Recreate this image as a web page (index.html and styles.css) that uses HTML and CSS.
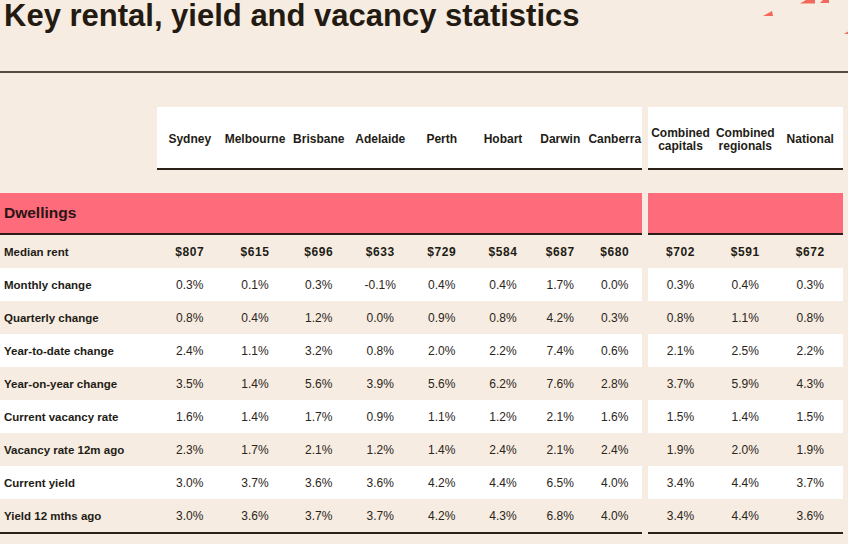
FILE: index.html
```html
<!DOCTYPE html>
<html lang="en">
<head>
<meta charset="utf-8">
<title>Key rental, yield and vacancy statistics</title>
<link rel="stylesheet" href="styles.css">
</head>
<body>
<div class="page">
  <header class="title-bar">
    <h1 class="title">Key rental, yield and vacancy statistics</h1>
    <svg class="deco" width="848" height="40" viewBox="0 0 848 40" aria-hidden="true">
      <polygon points="763,16 773,16 772,11" />
      <polygon points="800,3.5 815,3.5 815,0 806,0" />
      <polygon points="820,3 829,3 829,0 823,0" />
      <polygon points="844,34 848,34 848,31.5" />
    </svg>
  </header>

  <div class="table">
    <div class="row head">
      <div class="main">
        <div class="lbl"></div>
        <div class="c">Sydney</div>
        <div class="c">Melbourne</div>
        <div class="c">Brisbane</div>
        <div class="c">Adelaide</div>
        <div class="c">Perth</div>
        <div class="c">Hobart</div>
        <div class="c">Darwin</div>
        <div class="c">Canberra</div>
      </div>
      <div class="side">
        <div class="c">Combined<br>capitals</div>
        <div class="c">Combined<br>regionals</div>
        <div class="c">National</div>
      </div>
    </div>

    <div class="row section">
      <div class="main"><div class="sec-title">Dwellings</div></div>
      <div class="side"></div>
    </div>

    <div class="row data bold">
      <div class="main"><div class="lbl">Median rent</div><div class="c">$807</div><div class="c">$615</div><div class="c">$696</div><div class="c">$633</div><div class="c">$729</div><div class="c">$584</div><div class="c">$687</div><div class="c">$680</div></div>
      <div class="side"><div class="c">$702</div><div class="c">$591</div><div class="c">$672</div></div>
    </div>
    <div class="row data alt">
      <div class="main"><div class="lbl">Monthly change</div><div class="c">0.3%</div><div class="c">0.1%</div><div class="c">0.3%</div><div class="c">-0.1%</div><div class="c">0.4%</div><div class="c">0.4%</div><div class="c">1.7%</div><div class="c">0.0%</div></div>
      <div class="side"><div class="c">0.3%</div><div class="c">0.4%</div><div class="c">0.3%</div></div>
    </div>
    <div class="row data">
      <div class="main"><div class="lbl">Quarterly change</div><div class="c">0.8%</div><div class="c">0.4%</div><div class="c">1.2%</div><div class="c">0.0%</div><div class="c">0.9%</div><div class="c">0.8%</div><div class="c">4.2%</div><div class="c">0.3%</div></div>
      <div class="side"><div class="c">0.8%</div><div class="c">1.1%</div><div class="c">0.8%</div></div>
    </div>
    <div class="row data alt">
      <div class="main"><div class="lbl">Year-to-date change</div><div class="c">2.4%</div><div class="c">1.1%</div><div class="c">3.2%</div><div class="c">0.8%</div><div class="c">2.0%</div><div class="c">2.2%</div><div class="c">7.4%</div><div class="c">0.6%</div></div>
      <div class="side"><div class="c">2.1%</div><div class="c">2.5%</div><div class="c">2.2%</div></div>
    </div>
    <div class="row data">
      <div class="main"><div class="lbl">Year-on-year change</div><div class="c">3.5%</div><div class="c">1.4%</div><div class="c">5.6%</div><div class="c">3.9%</div><div class="c">5.6%</div><div class="c">6.2%</div><div class="c">7.6%</div><div class="c">2.8%</div></div>
      <div class="side"><div class="c">3.7%</div><div class="c">5.9%</div><div class="c">4.3%</div></div>
    </div>
    <div class="row data alt">
      <div class="main"><div class="lbl">Current vacancy rate</div><div class="c">1.6%</div><div class="c">1.4%</div><div class="c">1.7%</div><div class="c">0.9%</div><div class="c">1.1%</div><div class="c">1.2%</div><div class="c">2.1%</div><div class="c">1.6%</div></div>
      <div class="side"><div class="c">1.5%</div><div class="c">1.4%</div><div class="c">1.5%</div></div>
    </div>
    <div class="row data">
      <div class="main"><div class="lbl">Vacancy rate 12m ago</div><div class="c">2.3%</div><div class="c">1.7%</div><div class="c">2.1%</div><div class="c">1.2%</div><div class="c">1.4%</div><div class="c">2.4%</div><div class="c">2.1%</div><div class="c">2.4%</div></div>
      <div class="side"><div class="c">1.9%</div><div class="c">2.0%</div><div class="c">1.9%</div></div>
    </div>
    <div class="row data alt">
      <div class="main"><div class="lbl">Current yield</div><div class="c">3.0%</div><div class="c">3.7%</div><div class="c">3.6%</div><div class="c">3.6%</div><div class="c">4.2%</div><div class="c">4.4%</div><div class="c">6.5%</div><div class="c">4.0%</div></div>
      <div class="side"><div class="c">3.4%</div><div class="c">4.4%</div><div class="c">3.7%</div></div>
    </div>
    <div class="row data last">
      <div class="main"><div class="lbl">Yield 12 mths ago</div><div class="c">3.0%</div><div class="c">3.6%</div><div class="c">3.7%</div><div class="c">3.7%</div><div class="c">4.2%</div><div class="c">4.3%</div><div class="c">6.8%</div><div class="c">4.0%</div></div>
      <div class="side"><div class="c">3.4%</div><div class="c">4.4%</div><div class="c">3.6%</div></div>
    </div>
  </div>
</div>
</body>
</html>
```

FILE: styles.css
```css
html, body {
  margin: 0;
  padding: 0;
}

body {
  background: #f6ece1;
  color: #231c16;
  font-family: "Liberation Sans", Arial, sans-serif;
  width: 848px;
  height: 544px;
  overflow: hidden;
}

.page {
  width: 848px;
}

.title-bar {
  position: relative;
  height: 71px;
  border-bottom: 2px solid #564b42;
}

.title {
  margin: 0;
  padding-left: 4px;
  font-size: 31px;
  line-height: 31px;
  font-weight: 700;
  color: #231a12;
  white-space: nowrap;
}

.deco {
  position: absolute;
  left: 0;
  top: 0;
  fill: #f4685b;
}

.table {
  margin-top: 34px;
  display: flex;
  flex-direction: column;
}

.row {
  display: flex;
  gap: 6px;
}

.main {
  width: 642px;
  display: grid;
  grid-template-columns: 157px 65.5px 65px 62.5px 60.5px 62.5px 60px 54.5px 54.5px;
}

.side {
  width: 195px;
  display: grid;
  grid-template-columns: 65px 64.5px 65.5px;
}

.c {
  display: flex;
  align-items: center;
  justify-content: center;
  text-align: center;
  white-space: nowrap;
}

/* header */
.head .c {
  height: 57px;
  padding-top: 4px;
  background: #ffffff;
  border-bottom: 2px solid #2a211b;
  font-size: 12px;
  line-height: 13px;
  font-weight: 700;
}

/* section bar */
.section {
  margin-top: 23px;
}

.section .main,
.section .side {
  height: 40px;
  background: #fe6b7b;
  border-bottom: 2px solid #2a1d19;
}

.sec-title {
  grid-column: 1 / -1;
  display: flex;
  align-items: center;
  padding-left: 4px;
  font-size: 15.5px;
  font-weight: 700;
  color: #2a1414;
}

/* data rows */
.data .main,
.data .side {
  height: 33px;
}

.data .lbl {
  display: flex;
  align-items: center;
  padding-left: 4px;
  font-size: 11.5px;
  font-weight: 700;
  white-space: nowrap;
}

.data .c {
  font-size: 12px;
  color: #2b2520;
}

.data.bold .c {
  font-weight: 700;
  letter-spacing: 0.6px;
  color: #231c16;
}

.data.alt .main,
.data.alt .side {
  background: #ffffff;
}

.data.last .main,
.data.last .side {
  border-bottom: 2px solid #2a211b;
}
```
